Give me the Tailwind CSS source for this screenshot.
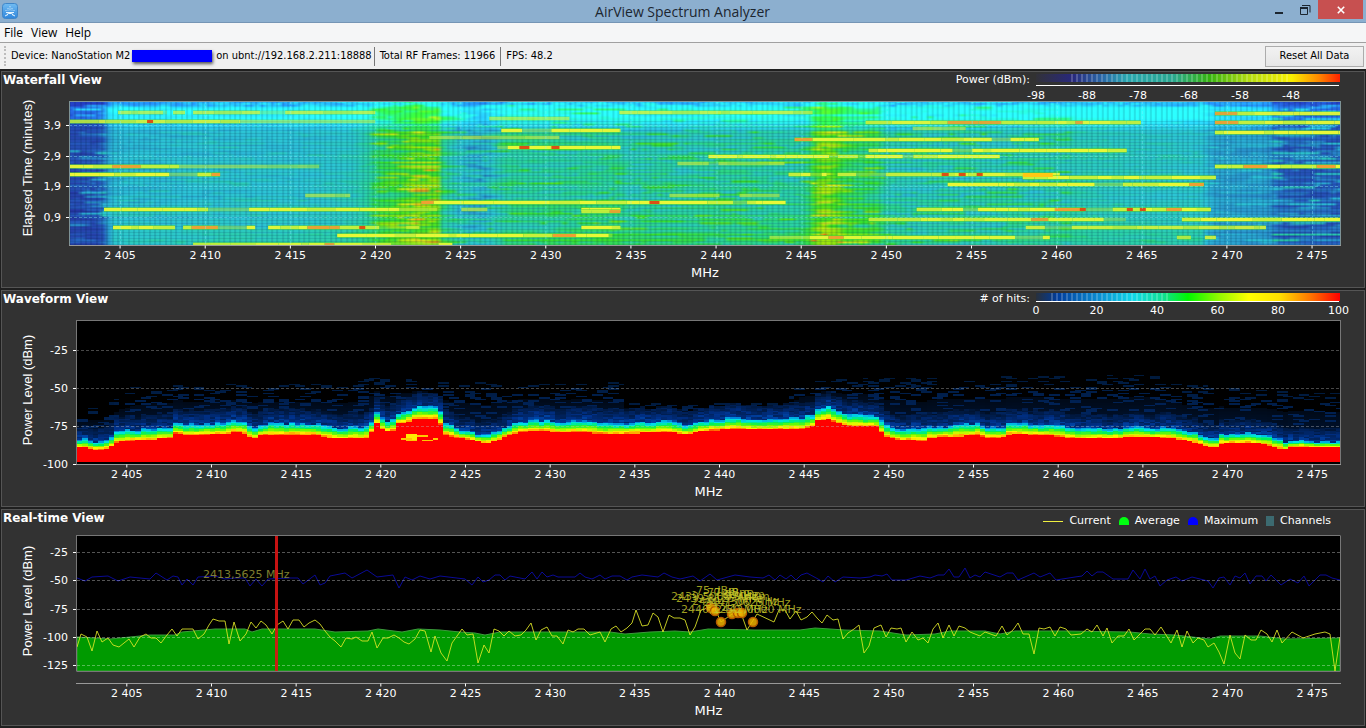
<!DOCTYPE html>
<html lang="en">
<head>
<meta charset="utf-8">
<title>AirView Spectrum Analyzer</title>
<script src="https://cdn.jsdelivr.net/npm/@tailwindcss/browser@4"></script>
</head>
<body class="flex min-h-screen flex-col bg-[#1f1f1f] font-['DejaVu_Sans',sans-serif] text-[11px] text-white">

<header class="flex h-[23px] items-start border-b border-[#7595b5] bg-[#8cafcf] text-[#1c2630]">
  <div class="flex flex-1 pt-[3px] pl-[2px]">
    <svg class="h-4 w-4" viewBox="0 0 16 16" aria-hidden="true">
      <defs><linearGradient id="ico" x1="0" y1="0" x2="0" y2="1"><stop offset="0" stop-color="#72bcf2"/><stop offset="1" stop-color="#2f86dc"/></linearGradient></defs>
      <rect x=".5" y=".5" width="15" height="15" rx="3" fill="url(#ico)" stroke="#3f86c9"/>
      <path d="M8 3v5M6 5v3M10 5v3M4 7v1M12 7v1" stroke="#c4e4fb" stroke-width="1" stroke-dasharray="1 .6"/>
      <path d="M4 9.500h8M6.500 10.500h3M3 13l3-1.500M13 13l-3-1.500M6.500 10l-1.500 2M9.500 10l1.500 2" stroke="#e6f5ff" stroke-width="1" fill="none"/>
    </svg>
  </div>
  <h1 class="font-['Open_Sans',sans-serif] text-[14px] leading-[23px]">AirView Spectrum Analyzer</h1>
  <div class="flex flex-1 justify-end pr-[3px]">
    <button aria-label="Minimize" class="flex h-[19px] w-[26px] items-center justify-center"><svg class="h-3 w-3" viewBox="0 0 12 12"><path d="M2 9h8" stroke="#1c2630" stroke-width="2"/></svg></button>
    <button aria-label="Restore" class="flex h-[19px] w-[26px] items-center justify-center"><svg class="h-3 w-3" viewBox="0 0 12 12"><path d="M1.500 4.500h7v6h-7z M3 1.500h8v7" fill="none" stroke="#1c2630"/><path d="M1 4h8" stroke="#1c2630" stroke-width="2"/></svg></button>
    <button aria-label="Close" class="flex h-[19px] w-[45px] items-center justify-center bg-[#c75050]"><svg class="h-2 w-2" viewBox="0 0 8 8"><path d="M.8.8l6.400 6.400M7.200.8L.8 7.200" stroke="#fff" stroke-width="1.600"/></svg></button>
  </div>
</header>

<nav class="flex h-5 items-center gap-2 border-b border-[#a0a0a0] bg-[#f5f6f7] px-1 font-['Open_Sans',sans-serif] text-[12px] text-black">
  <button>File</button><button>View</button><button>Help</button>
</nav>

<section class="flex h-[26px] items-center bg-[#f0f0f0] pr-[2px] pl-1 font-['DejaVu_Sans_Condensed','DejaVu_Sans',sans-serif] text-black">
  <span class="mr-[5px] h-5 border-l-2 border-dotted border-[#bdbdbd]"></span>
  <span>Device: NanoStation M2 (</span>
  <span class="-ml-[5px] h-3 w-20 bg-[#0000fe] shadow-[1px_2px_3px_#555]"></span>
  <span class="ml-1">on ubnt://192.168.2.211:18888</span>
  <span class="mr-[5px] ml-[2px] h-[19px] border-l border-[#777]"></span>
  <span>Total RF Frames: 11966</span>
  <span class="mx-[5px] h-[19px] border-l border-[#777]"></span>
  <span>FPS: 48.2</span>
  <button class="ml-auto h-[21px] w-[99px] border border-[#acacac] bg-gradient-to-b from-[#f2f2f2] to-[#e6e6e6]">Reset All Data</button>
</section>

<main class="flex flex-1 flex-col gap-[2px] px-px pt-[2px] pb-px">

  <section class="border border-[#555] bg-[#323232] pr-[23px]">
    <div class="flex h-[29px] justify-between">
      <h2 class="pl-px text-[12px] font-bold leading-4">Waterfall View</h2>
      <div class="flex gap-[6px]">
        <span class="leading-4">Power (dBm):</span>
        <svg id="powerScale" class="h-[29px] w-[305px] overflow-visible fill-white">
          <defs>
            <linearGradient id="gp"><stop offset="0" stop-color="#323238"/><stop offset=".12" stop-color="#28287c"/><stop offset=".22" stop-color="#2a6aa8"/><stop offset=".3" stop-color="#2ba8b0"/><stop offset=".45" stop-color="#2aa890"/><stop offset=".57" stop-color="#35b410"/><stop offset=".7" stop-color="#b4dc10"/><stop offset=".84" stop-color="#f8f000"/><stop offset=".93" stop-color="#ff8800"/><stop offset="1" stop-color="#ff2200"/></linearGradient>
            <pattern id="bars" width="5" height="10" patternUnits="userSpaceOnUse"><rect width="2" height="10" fill="#fff" fill-opacity=".2"/></pattern>
          </defs>
          <rect y="2" width="304" height="8" fill="url(#gp)"/><rect x="35" y="2" width="220" height="8" fill="url(#bars)"/>
          <path d="M0 13.500h303" stroke="#fff"/>
        </svg>
      </div>
    </div>
    <div class="grid grid-cols-[67px_1fr]">
      <svg id="y1" class="h-[144px] w-full overflow-visible fill-white"></svg>
      <canvas id="waterfall" class="h-[144px] w-full"></canvas>
      <svg id="x1" class="col-start-2 h-[42px] w-full overflow-visible fill-white"></svg>
    </div>
  </section>

  <section class="border border-[#555] bg-[#323232] pr-[23px]">
    <div class="flex h-[29px] justify-between">
      <h2 class="pl-px text-[12px] font-bold leading-4">Waveform View</h2>
      <div class="flex gap-[6px]">
        <span class="leading-4"># of hits:</span>
        <svg id="hitScale" class="h-[29px] w-[305px] overflow-visible fill-white">
          <defs><linearGradient id="gh"><stop offset="0" stop-color="#28303c"/><stop offset=".07" stop-color="#003c9c"/><stop offset=".2" stop-color="#0a8ad0"/><stop offset=".32" stop-color="#10d8e8"/><stop offset=".42" stop-color="#10e090"/><stop offset=".5" stop-color="#00f800"/><stop offset=".6" stop-color="#90f800"/><stop offset=".7" stop-color="#ffff00"/><stop offset=".8" stop-color="#ffe000"/><stop offset=".9" stop-color="#ff7800"/><stop offset="1" stop-color="#ff0000"/></linearGradient></defs>
          <rect y="2" width="304" height="8" fill="url(#gh)"/><rect x="15" y="2" width="120" height="8" fill="url(#bars)"/>
          <path d="M0 10.500h303" stroke="#fff"/>
        </svg>
      </div>
    </div>
    <div class="grid grid-cols-[74px_1fr]">
      <svg id="y2" class="h-[144px] w-full overflow-visible fill-white"></svg>
      <canvas id="waveform" class="h-[144px] w-full"></canvas>
      <svg id="x2" class="col-start-2 h-[42px] w-full overflow-visible fill-white"></svg>
    </div>
  </section>

  <section class="border border-[#555] bg-[#323232] pr-[23px]">
    <div class="flex h-[25px] justify-between">
      <h2 class="pl-px text-[12px] font-bold leading-4">Real-time View</h2>
      <ul class="flex items-center gap-2 pr-[10px] pb-[3px]">
        <li class="flex items-center gap-[6px]"><span class="h-px w-5 bg-[#f0f040]"></span>Current</li>
        <li class="flex items-center gap-[6px]"><span class="h-2 w-[10px] rounded-t-full bg-[#00ff10]"></span>Average</li>
        <li class="flex items-center gap-[6px]"><span class="h-2 w-[10px] rounded-t-full bg-[#0000ff]"></span>Maximum</li>
        <li class="flex items-center gap-[6px]"><span class="h-[10px] w-2 bg-[#3c6a70]"></span>Channels</li>
      </ul>
    </div>
    <div class="grid grid-cols-[74px_1fr]">
      <svg id="y3" class="h-[137px] w-full overflow-visible fill-white"></svg>
      <svg class="h-[137px] w-full bg-black" viewBox="76 535 1265 137" preserveAspectRatio="none">
        <path d="M77 578L85 581 92 577 108 576 118 581 130 577 150 579 156 573 167 580 173 576 178 577 182 585 187 579 193 585 198 577 215 576 225 579 235 578 245 578 250 586 256 579 262 586 268 579 290 578 298 578 303 584 315 575 320 585 325 583 330 576 345 573 352 578 367 570 377 577 393 575 399 588 405 577 412 580 420 576 430 579 440 576 465 579 472 585 478 577 483 582 489 580 495 575 500 575 505 580 510 576 525 579 532 572 537 579 542 572 547 577 553 575 558 577 575 577 580 573 585 577 592 579 600 575 605 579 612 576 620 576 627 580 632 577 642 575 658 577 664 573 672 577 680 579 693 576 700 581 710 574 717 580 735 575 750 577 763 578 769 575 775 580 780 575 786 579 791 575 796 580 801 575 807 573 818 579 823 582 828 576 835 582 843 577 860 578 870 577 875 575 882 576 887 574 892 580 906 580 920 576 930 578 938 575 944 575 949 569 954 577 959 577 965 568 970 578 975 575 980 577 985 572 1000 577 1007 573 1013 573 1018 580 1034 573 1040 577 1050 573 1056 580 1075 577 1082 576 1087 571 1092 576 1097 572 1103 572 1113 579 1128 579 1133 570 1140 579 1145 569 1150 579 1155 576 1160 586 1167 580 1176 577 1182 581 1192 577 1208 581 1213 588 1219 578 1224 577 1230 585 1235 576 1240 578 1245 573 1250 584 1256 576 1262 576 1266 581 1271 575 1281 585 1290 579 1298 583 1304 576 1309 586 1320 575 1326 575 1332 578 1340 580" fill="none" stroke="#0a0a96"/>
        <path d="M77 637L110 639 150 635 175 635 182 632 215 629 245 629 252 632 262 629 315 629 335 632 368 631 378 629 402 632 418 629 440 630 460 632 475 633 485 635 500 632 610 632 625 634 650 632 675 631 690 632 708 629 755 630 800 630 815 628 845 630 880 631 906 635 935 634 950 631 985 631 1000 634 1015 631 1065 631 1130 632 1150 634 1175 635 1210 639 1220 636 1260 636 1285 639 1340 638V671H77z" fill="#009a00" stroke="#3c9a3c"/>
        <g fill="none" stroke="#fff" stroke-opacity=".33" stroke-dasharray="3 2"><path d="M77 552.500H1340M77 580.500H1340M77 609.500H1340M77 637.500H1340M77 665.500H1340"/></g>
        <path d="M77 647L81 634 87 637 92 651 97 631 102 642 108 638 113 645 119 647 129 639 134 647 140 637 146 634 151 638 156 638 161 643 167 635 172 629 177 636 182 629 193 629 198 639 204 634 209 625 213 619 219 621 225 621 229 644 234 622 240 641 246 634 251 622 256 628 261 621 266 625 272 634 277 625 283 621 288 629 293 620 299 620 304 627 309 623 315 620 320 624 325 631 330 637 335 641 341 647 346 638 352 639 356 637 362 641 368 641 372 632 377 648 383 638 388 638 394 635 399 638 404 642 409 644 415 639 420 630 425 631 431 652 435 636 441 653 447 661 452 643 462 629 467 635 473 634 478 663 484 645 489 653 494 629 499 631 504 636 509 631 515 636 521 635 526 630 531 623 536 640 541 630 547 627 552 636 557 636 563 644 568 630 573 632 578 629 584 629 590 635 600 632 605 642 611 629 616 626 621 632 627 628 632 623 636 610 642 626 648 625 653 613 658 617 663 632 669 615 674 618 680 618 685 620 690 635 695 627 701 610 711 607 716 611 721 622 732 614 741 613 747 630 757 614 774 622 779 610 785 610 790 619 796 611 801 620 807 617 812 612 817 618 822 623 827 615 833 620 838 619 843 639 848 633 854 629 859 625 864 653 869 646 874 628 881 625 886 637 891 628 897 629 901 628 906 642 912 632 918 640 923 638 928 643 933 629 938 623 943 638 949 625 954 636 959 626 965 628 970 632 980 636 985 632 996 636 1002 626 1007 635 1013 630 1018 623 1023 634 1029 634 1034 654 1039 628 1044 629 1050 627 1055 636 1060 627 1066 629 1071 635 1081 634 1087 629 1092 632 1097 625 1103 636 1107 628 1112 643 1118 636 1124 636 1129 629 1134 640 1140 634 1145 629 1150 629 1155 635 1161 627 1166 635 1171 643 1177 630 1182 647 1187 631 1193 643 1198 638 1204 640 1208 647 1214 643 1219 652 1224 664 1230 635 1235 653 1240 659 1245 635 1251 640 1256 640 1261 630 1267 634 1272 642 1277 630 1282 643 1292 632 1303 638 1315 634 1325 632 1330 634 1335 671 1340 637" fill="none" stroke="#e0e828" stroke-opacity=".85"/>
        <g fill="#f0b400" fill-opacity=".85" stroke="#b45a00" stroke-width="1.500"><circle cx="711" cy="608" r="4.500"/><circle cx="715" cy="611" r="4.500"/><circle cx="721" cy="622" r="4.500"/><circle cx="732" cy="614" r="4.500"/><circle cx="738" cy="613" r="4.500"/><circle cx="742" cy="613" r="4.500"/><circle cx="753" cy="622" r="4.500"/></g>
        <g class="text-[11px]" fill="#c8c828" fill-opacity=".8">
          <text x="203" y="578" fill="#a0a03c">2413,5625 MHz</text>
          <text x="692" y="594">-75 dBm</text><text x="703" y="596">-77 dBm</text>
          <text x="671" y="600">2439,5000 MHz</text><text x="676" y="602">2439,8125 MHz</text>
          <text x="718" y="598">-80 dBm</text><text x="723" y="600">-79 dBm</text>
          <text x="692" y="605">2440,7500 MHz</text><text x="704" y="606">2441,0625 MHz</text>
          <text x="681" y="613">2440,1250 MHz</text><text x="715" y="613">2442,0000 MHz</text>
        </g>
        <path d="M276.500 535V671" stroke="#dc1414" stroke-width="3" stroke-opacity=".9"/>
        <path d="M76.500 535V671.500H1340.500V535.500H76.500" fill="none" stroke="#777"/>
      </svg>
      <svg id="x3" class="col-start-2 h-[53px] w-full overflow-visible fill-white"></svg>
    </div>
  </section>
</main>

<script>
const NS = 'http://www.w3.org/2000/svg';
const FREQ0 = 2402, SPAN = 74.7;
const $ = id => document.getElementById(id);
function add(parent, tag, attrs, text) {
  const e = document.createElementNS(NS, tag);
  for (const k in attrs) e.setAttribute(k, attrs[k]);
  if (text) e.textContent = text;
  parent.appendChild(e);
}
// Horizontal frequency axis
function xAxis(id, line, label) {
  const s = $(id);
  if (line) add(s, 'line', {x1: 0, x2: '100%', y1: line, y2: line, stroke: '#999'});
  for (let f = 2405; f <= 2475; f += 5) {
    const x = ((f - FREQ0) / SPAN * 100) + '%';
    add(s, 'line', {x1: x, x2: x, y1: line, y2: line + 3, stroke: '#fff'});
    add(s, 'text', {x: x, y: label, 'text-anchor': 'middle'}, '2 ' + (f - 2000));
  }
  add(s, 'text', {x: '50%', y: label + 18, 'text-anchor': 'middle', class: "text-[13px]"}, 'MHz');
}
function yAxis(id, w, title, mid, ticks) {
  const s = $(id);
  for (const [t, y] of ticks) {
    add(s, 'line', {x1: w - 3, x2: w, y1: y, y2: y, stroke: '#fff'});
    add(s, 'text', {x: w - 8, y: y + 3.5, 'text-anchor': 'end'}, t);
  }
  add(s, 'text', {transform: `translate(30 ${mid}) rotate(-90)`, 'text-anchor': 'middle', class: "font-['Liberation_Sans',sans-serif] text-[13px]"}, title);
}
xAxis('x1', .5, 14); xAxis('x2', .5, 14); xAxis('x3', 11.5, 25);
yAxis('y1', 67, 'Elapsed Time (minutes)', 67, [['3,9', 24.5], ['2,9', 55.5], ['1,9', 85.5], ['0,9', 116.5]]);
yAxis('y2', 74, 'Power Level (dBm)', 70, [['-25', 30.5], ['-50', 68.5], ['-75', 106.5], ['-100', 144.5]]);
yAxis('y3', 74, 'Power Level (dBm)', 66, [['-25', 17.5], ['-50', 45.5], ['-75', 74.5], ['-100', 102.5], ['-125', 130.5]]);
for (let i = 0; i < 6; i++) {
  add($('powerScale'), 'text', {x: i * 51, y: 27, 'text-anchor': 'middle'}, String(-98 + i * 10));
  add($('hitScale'), 'text', {x: i * 60.5, y: 23, 'text-anchor': 'middle'}, String(i * 20));
}

let seed;
function rnd() { seed = (seed * 1664525 + 1013904223) >>> 0; return seed / 4294967296; }
function ramp(stops, v) {
  if (v <= stops[0][0]) return stops[0][1];
  for (let i = 1; i < stops.length; i++) if (v <= stops[i][0]) {
    const [a, c] = stops[i - 1], [b, d] = stops[i], t = (v - a) / (b - a);
    return c.map((q, k) => q + (d[k] - q) * t);
  }
  return stops[stops.length - 1][1];
}
function curve(pts, x) {
  if (x <= pts[0][0]) return pts[0][1];
  for (let i = 1; i < pts.length; i++) if (x <= pts[i][0]) {
    const [a, c] = pts[i - 1], [b, d] = pts[i];
    return c + (d - c) * (x - a) / (b - a);
  }
  return pts[pts.length - 1][1];
}
function prep(id, w) {
  const c = $(id); c.width = c.clientWidth; c.height = c.clientHeight;
  const g = c.getContext('2d'); g.scale(c.width / w, 1); return g;
}
function raster(w, h, fn) {
  const c = document.createElement('canvas'); c.width = w; c.height = h;
  const g = c.getContext('2d'), im = g.createImageData(w, h);
  for (let y = 0; y < h; y++) for (let x = 0; x < w; x++) {
    const p = fn(x, y), i = (y * w + x) * 4;
    im.data[i] = p[0]; im.data[i + 1] = p[1]; im.data[i + 2] = p[2]; im.data[i + 3] = 255;
  }
  g.putImageData(im, 0, 0); return c;
}
const HEAT = [[0, [36, 40, 150]], [.2, [38, 92, 190]], [.4, [44, 196, 216]], [.55, [42, 212, 150]], [.7, [56, 225, 40]], [.82, [160, 230, 10]], [.92, [225, 240, 30]], [1, [240, 120, 20]]];
const LEVEL = [[0, .14], [28, .16], [40, .38], [230, .41], [280, .44], [295, .5], [308, .6], [330, .66], [345, .74], [366, .74], [371, .54], [388, .42], [400, .38], [412, .37], [425, .45], [435, .51], [550, .52], [552, .49], [735, .51], [740, .64], [750, .76], [765, .72], [775, .62], [805, .6], [814, .47], [1000, .47], [1060, .44], [1130, .42], [1142, .34], [1195, .33], [1208, .24], [1271, .22]];
// Carrier traces: start, end, row, strength
const TRACES = [[49,98,11,.6],[104,116,11,.6],[124,306,11,.65],[0,171,20,.8],[171,306,20,.4],[0,110,65,.95],[110,250,65,.4],[0,151,73,1],[35,330,108,.95],[330,368,108,.5],[44,106,126,.95],[114,186,126,.95],[199,310,126,.95],[310,350,126,.6],[268,543,134,1],[124,383,143,.9],[352,716,101,1],[236,281,94,.5],[432,551,29,.95],[428,551,46,1],[550,743,11,.7],[512,551,108,1],[512,551,110,.9],[512,551,126,1],[639,930,55,1],[725,969,38,.95],[719,757,73,.95],[768,990,73,.95],[796,1071,21,.9],[799,1057,49,1],[799,1056,118,.9],[700,740,136,.5],[740,980,136,.95],[843,896,27,.45],[953,1146,76,1],[878,1134,83,1],[847,1141,108,1],[1112,1271,118,1],[956,1196,126,.8],[1107,1121,136,.8],[1135,1146,136,.8],[1145,1271,12,.9],[1145,1271,21,.95],[1145,1271,31,1],[1145,1271,65,1],[608,715,62,.5],[420,500,17,.5],[360,490,36,.5],[392,418,108,.55],[600,650,94,.5],[670,710,94,.5]];
function drawWaterfall() {
  seed = 77;
  const g = prep('waterfall', 1271), rows = 76, cols = 240;
  const noise = [];
  for (let y = 0; y < rows; y++) {
    let v = 0; noise.push([]);
    const rowBias = (rnd() - .5) * .09;
    for (let x = 0; x < cols; x++) {
      if (rnd() < .3) v = (rnd() - .5) * .17 + (rnd() < .14 ? .16 : 0);
      noise[y].push(v + rowBias);
    }
  }
  g.imageSmoothingEnabled = true;
  g.drawImage(raster(cols, rows, (x, y) => {
    const px = x * 5.3, top = Math.max(0, Math.min(1, (16 - y) / 8)), mid = px > 360 && px < 740;
    const amp = (px < 36 || px > 1200) ? 1.1 : (px > 300 && px < 368 || px > 738 && px < 776) ? 1 : mid || px > 776 && px < 1000 ? .9 : .3;
    let v = curve(LEVEL, px) + noise[y][x] * amp;
    if (px > 36 && px < 1130) v += (y / rows - .5) * (mid ? .1 : .03);
    if (y > 66 && px > 40 && px < 1130) v += .05;
    if (top > 0 && px > 36 && px < 1130) v = v * .85 + .05;
    if (y < 3) v -= .14 * rnd() + .05;
    const c = ramp(HEAT, v);
    if (px < 36 || px > 1200) return [c[0], c[1] + top * 20, Math.min(255, c[2] + top * 45)];
    return [c[0], Math.min(255, c[1] + top * 62), Math.min(255, c[2] + top * (v > .56 ? 20 : 70))];
  }), 0, 0, 1271, 144);
  g.fillStyle = 'rgba(0,30,60,.13)';
  for (let x = 0; x < 1271; x += 5.32) g.fillRect(Math.round(x), 0, 2, 144);
  g.fillStyle = 'rgba(0,40,80,.12)';
  for (let y = 20; y < 144; y += 3) g.fillRect(0, y, 1271, 1);
  for (const [a, b, y, s] of TRACES) {
    for (let x = a; x < b;) {
      const w = Math.min(b - x, 5 + rnd() * 26), r = rnd();
      g.globalAlpha = s * (r < .06 ? .35 : 1);
      g.fillStyle = 'rgba(95,212,50,.6)'; g.fillRect(x, y - 2, w, 5);
      g.fillStyle = r > .93 && s > .8 ? '#f0a032' : r > .35 ? '#e8f838' : '#c8f03c';
      g.fillRect(x, y - 1, w, 3);
      x += w;
    }
  }
  g.globalAlpha = 1;
  for (const [x, y, w] of [[290,126,6],[450,46,10],[482,46,8],[872,73,7],[889,73,7],[907,73,6],[1010,108,6],[1057,108,6],[1070,108,6],[580,101,10],[78,20,6]]) { g.fillStyle = '#dc5014'; g.fillRect(x, y - 1, w, 3); }
  g.fillStyle = '#ffc814'; g.fillRect(953, 72, 30, 4);
  g.strokeStyle = 'rgba(140,240,250,.4)'; g.setLineDash([3, 2]); g.beginPath();
  for (let f = 3; f < 75; f += 5) { const x = Math.round(f / SPAN * 1271) + .5; g.moveTo(x, 0); g.lineTo(x, 144); }
  for (const y of [24.5, 55.5, 85.5, 116.5]) { g.moveTo(0, y); g.lineTo(1271, y); }
  g.stroke(); g.setLineDash([]);
  g.strokeStyle = '#7d9296'; g.strokeRect(.5, .5, 1270, 144);
}
const FLOOR = [[77,447],[85,447],[90,449],[100,449],[105,447],[110,445],[115,441],[130,440],[160,438],[171,437],[173,431],[178,433],[180,435],[200,434],[225,433],[232,431],[240,431],[245,436],[252,438],[257,435],[262,434],[310,434],[330,438],[345,438],[365,437],[370,430],[374,423],[378,422],[380,430],[388,431],[393,429],[395,423],[405,421],[412,418],[433,418],[438,423],[443,434],[455,437],[470,439],[482,443],[490,441],[500,437],[516,431],[540,430],[560,432],[580,431],[600,433],[620,433],[640,432],[670,431],[685,434],[700,430],[735,428],[755,429],[800,428],[812,425],[815,420],[825,418],[833,421],[845,425],[875,426],[882,436],[895,439],[922,440],[925,438],[940,436],[950,436],[975,434],[985,437],[1000,437],[1005,434],[1012,433],[1050,435],[1075,438],[1110,438],[1130,436],[1165,437],[1190,441],[1205,446],[1215,447],[1216,443],[1240,442],[1260,443],[1275,447],[1283,449],[1288,446],[1320,447],[1340,447]];
const TOP = [[77,408],[100,406],[112,398],[130,386],[160,383],[340,383],[370,375],[440,382],[620,382],[625,402],[780,402],[800,380],[830,378],[1150,374],[1180,384],[1340,392]];
const BAND = [[77,6],[103,6],[115,9],[170,9],[240,10],[440,10],[470,6],[490,6],[510,9],[800,9],[820,11],[880,10],[1060,9],[1180,8],[1275,8],[1290,5],[1340,5]];
const HITS = [[0, [0, 0, 0]], [.08, [0, 26, 68]], [.2, [0, 50, 140]], [.35, [0, 110, 215]], [.48, [0, 225, 235]], [.6, [0, 240, 90]], [.72, [110, 250, 0]], [.85, [255, 245, 0]], [1, [255, 60, 0]]];
function drawWaveform() {
  seed = 4242;
  const g = prep('waveform', 1265), cols = 238, rows = 95;
  const spark = Array.from({length: rows}, () => { let on = 0; return Array.from({length: cols}, () => { if (on > 0) on--; else if (rnd() < .16) on = 2; return on > 0 ? 1 : 0; }); });
  const jit = Array.from({length: cols}, () => rnd());
  g.imageSmoothingEnabled = false;
  g.drawImage(raster(cols, rows, (x, y) => {
    const px = 77 + x * 5.31, py = 320 + y * 1.516, floor = curve(FLOOR, px), top = curve(TOP, px);
    if (py > 462) return [0, 0, 0];
    const d = floor - py, h = curve(BAND, px) + jit[x] * 3;
    if (d < 0) {
      if (px > 400 && px < 437 && py > 434 && py < 440 && rnd() < .3) return [255, 200, 0];
      if (px > 405 && px < 415 && py > 433 && py < 440) return [255, 235, 0];
      return [255, 0, 0];
    }
    if (d < h) return ramp(HITS, .95 - .57 * d / h + (rnd() - .5) * .08);
    if (d < h + 14) {
      const t = (d - h) / 14;
      return ramp(HITS, Math.max(0, (.25 - .17 * t) * (.55 + rnd() * .6)));
    }
    if (py < top) return [0, 0, 0];
    const den = Math.max(0, (py - top) / Math.max(1, floor - 16 - top));
    if (spark[y][x]) return [0, 26 + den * 12, 60 + den * 40];
    return den > .5 ? [0, 18 * den, 46 * den] : [0, 0, 0];
  }), 1, 0, 1264, 144);
  g.strokeStyle = 'rgba(190,190,190,.38)'; g.setLineDash([3, 2]); g.beginPath();
  for (const y of [30.5, 68.5, 106.5]) { g.moveTo(0, y); g.lineTo(1265, y); }
  g.stroke(); g.setLineDash([]);
  g.strokeStyle = '#777'; g.strokeRect(.5, .5, 1264, 144);
}
function draw() { drawWaterfall(); drawWaveform(); }
draw();
addEventListener('load', draw);
addEventListener('resize', draw);
</script>
</body>
</html>
